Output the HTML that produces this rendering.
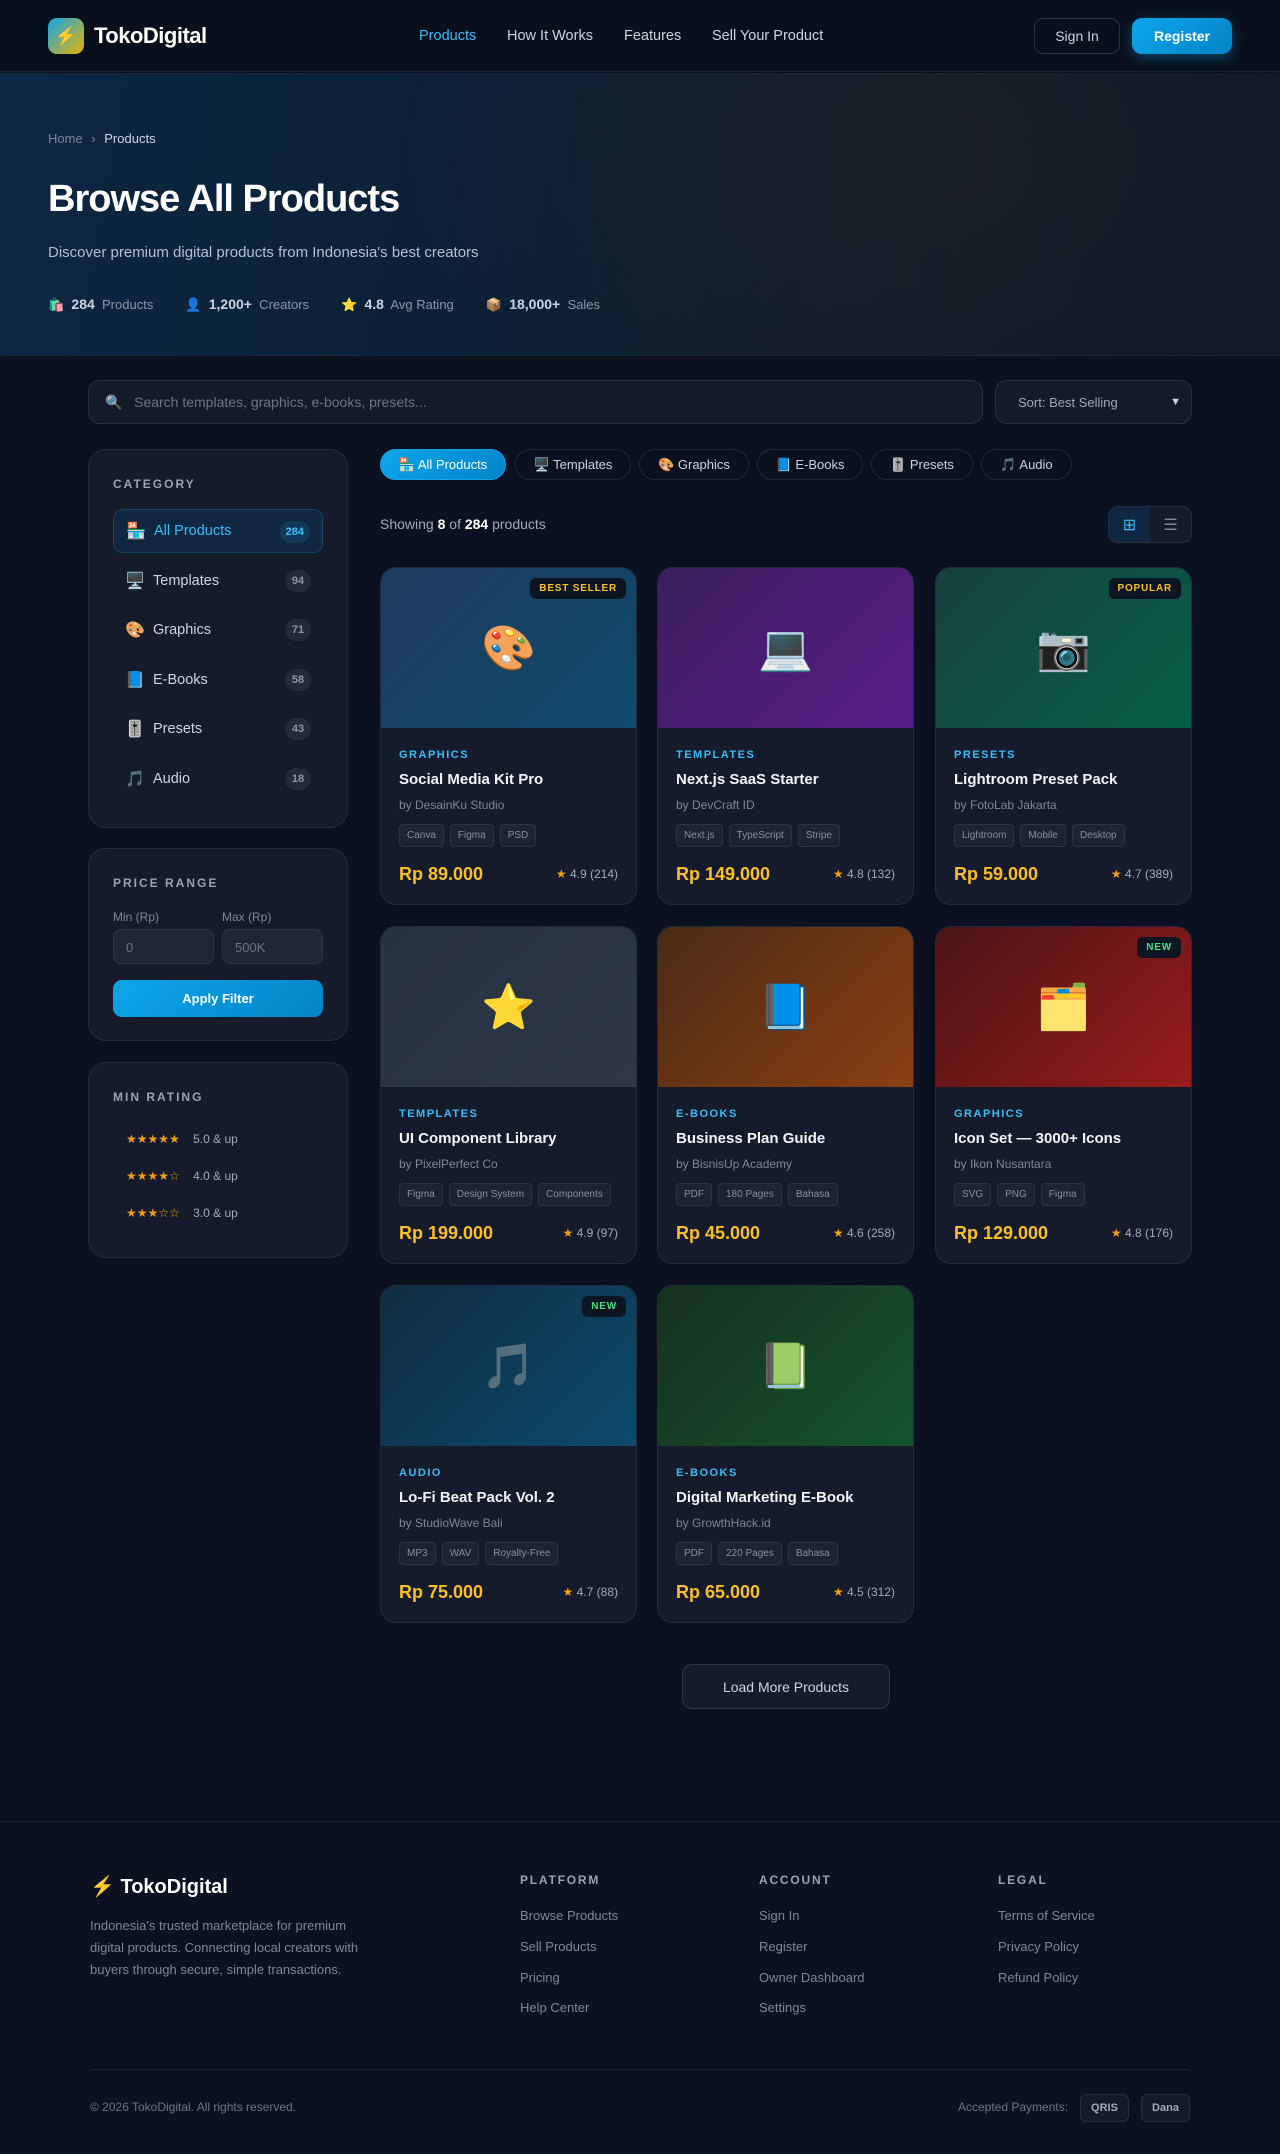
<!DOCTYPE html>
<html><head><meta charset="utf-8"><style>
*{box-sizing:border-box;margin:0;padding:0}
body{width:1280px;height:2154px;background:#0b1120;font-family:"Liberation Sans",sans-serif;color:#e2e8f0;position:relative;overflow:hidden}
.abs{position:absolute}
nav{position:absolute;left:0;top:0;width:1280px;height:72px;background:#0a0f1c;border-bottom:1px solid #1c2434}
.logo-ic{left:48px;top:18px;width:36px;height:36px;border-radius:9px;background:linear-gradient(135deg,#0ea5e9,#eab308);display:flex;align-items:center;justify-content:center;font-size:18px}
.logo-tx{left:94px;top:23px;font-size:22px;font-weight:bold;color:#fff;letter-spacing:-0.5px}
.nl{top:28px;font-size:14.5px;color:#cbd5e1}
.btn-s{left:1034px;top:18px;width:86px;height:36px;border:1px solid #2a3344;border-radius:10px;color:#cbd5e1;font-size:14px;display:flex;align-items:center;justify-content:center}
.btn-r{left:1132px;top:18px;width:100px;height:36px;border-radius:10px;background:linear-gradient(135deg,#0ea5e9,#0284c7);color:#fff;font-weight:bold;font-size:14px;display:flex;align-items:center;justify-content:center;box-shadow:0 4px 14px rgba(14,165,233,.35)}
.hero{left:0;top:73px;width:1280px;height:283px;background:radial-gradient(ellipse 500px 350px at 900px 80px,rgba(40,40,40,.45),transparent),linear-gradient(100deg,#0d2642 0%,#0c2036 40%,#111a28 75%,#0f1726 100%);border-bottom:1px solid #1c2434}
.card{background:#151b2a;border:1px solid #232c3d;border-radius:18px}
.side-h{font-size:12px;font-weight:bold;letter-spacing:2px;color:#94a3b8}
.ci{left:24px;width:210px;height:44px;border-radius:10px;display:flex;align-items:center;padding-left:12px;font-size:14.5px;color:#cbd5e1}
.ci .e{width:28px;font-size:16px}
.ci .b{position:absolute;right:12px;top:11px;min-width:26px;height:22px;border-radius:11px;background:#232b3b;color:#8b95a7;font-size:11px;font-weight:bold;display:flex;align-items:center;justify-content:center;padding:0 6px}
.tab{top:449px;height:31px;border:1px solid #1f2838;border-radius:16px;font-size:13px;color:#cbd5e1;display:flex;align-items:center;justify-content:center}
.pc{position:absolute;width:257px;height:338px;background:#151b2a;border:1px solid #232c3d;border-radius:16px;overflow:hidden}
.pc .img{height:160px;display:flex;align-items:center;justify-content:center;font-size:44px;position:relative}
.badge{position:absolute;right:10px;top:10px;background:#0d1422;border-radius:6px;padding:5px 9px;font-size:10px;font-weight:bold;letter-spacing:.8px}
.pc .cat{position:absolute;left:18px;top:181px;font-size:11px;font-weight:bold;letter-spacing:1.5px;color:#38bdf8}
.pc .t{position:absolute;left:18px;top:203px;font-size:15px;font-weight:bold;color:#f1f5f9}
.pc .by{position:absolute;left:18px;top:230px;font-size:12px;color:#7c869a}
.pc .tags{position:absolute;left:18px;top:256px;display:flex;gap:6px}
.pc .tags span{border:1px solid #2a3344;background:#1c2333;border-radius:4px;font-size:10px;color:#8390a4;padding:5px 7px}
.pc .pr{position:absolute;left:18px;top:296px;font-size:18px;font-weight:bold;color:#fbbf24}
.pc .rt{position:absolute;right:18px;top:299px;font-size:12px;color:#a0aabb}
.pc .rt b{color:#f59e0b;font-weight:normal}
.fh{top:1873px;font-size:12px;font-weight:bold;letter-spacing:1.8px;color:#94a3b8}
.fl{font-size:13px;color:#7c869a}
</style></head><body>
<nav>
<div class="abs logo-ic">⚡</div>
<div class="abs logo-tx">TokoDigital</div>
<div class="abs nl" style="left:419px;color:#38bdf8">Products</div>
<div class="abs nl" style="left:507px">How It Works</div>
<div class="abs nl" style="left:624px">Features</div>
<div class="abs nl" style="left:712px">Sell Your Product</div>
<div class="abs btn-s">Sign In</div>
<div class="abs btn-r">Register</div>
</nav>
<div class="abs hero"></div>
<div class="abs" style="left:48px;top:131px;font-size:13px;color:#7c869a">Home <span style="margin:0 5px">›</span> <span style="color:#cbd5e1">Products</span></div>
<div class="abs" style="left:48px;top:178px;font-size:38px;font-weight:bold;color:#fff;letter-spacing:-1px">Browse All Products</div>
<div class="abs" style="left:48px;top:244px;font-size:15px;color:#b4bfcf">Discover premium digital products from Indonesia's best creators</div>
<div class="abs" style="left:48px;top:296px;font-size:13px;color:#8b95a7;display:flex;gap:32px">
<span>🛍️ &nbsp;<b style="color:#cbd5e1;font-size:14px">284</b>&nbsp; Products</span>
<span>👤 &nbsp;<b style="color:#cbd5e1;font-size:14px">1,200+</b>&nbsp; Creators</span>
<span>⭐ &nbsp;<b style="color:#cbd5e1;font-size:14px">4.8</b>&nbsp; Avg Rating</span>
<span>📦 &nbsp;<b style="color:#cbd5e1;font-size:14px">18,000+</b>&nbsp; Sales</span>
</div>

<div class="abs" style="left:88px;top:380px;width:895px;height:44px;background:#131a28;border:1px solid #263042;border-radius:12px;font-size:14px;color:#6b7588;display:flex;align-items:center;padding-left:16px">🔍&nbsp;&nbsp; Search templates, graphics, e-books, presets...</div>
<div class="abs" style="left:995px;top:380px;width:197px;height:44px;background:#131a28;border:1px solid #263042;border-radius:12px;font-size:13px;color:#a0aabb;display:flex;align-items:center;padding-left:22px">Sort: Best Selling<span style="position:absolute;right:10px;font-size:11px;color:#cbd5e1">▼</span></div>

<div class="abs card" style="left:88px;top:449px;width:260px;height:379px">
<div class="abs side-h" style="left:24px;top:27px">CATEGORY</div>
<div class="abs ci" style="top:59px;background:#112741;border:1px solid #1a4466;color:#38bdf8"><span class="e">🏪</span>All Products<span class="b" style="background:#123a58;color:#38bdf8">284</span></div>
<div class="abs ci" style="top:109px"><span class="e">🖥️</span>Templates<span class="b">94</span></div>
<div class="abs ci" style="top:158px"><span class="e">🎨</span>Graphics<span class="b">71</span></div>
<div class="abs ci" style="top:208px"><span class="e">📘</span>E-Books<span class="b">58</span></div>
<div class="abs ci" style="top:257px"><span class="e">🎚️</span>Presets<span class="b">43</span></div>
<div class="abs ci" style="top:307px"><span class="e">🎵</span>Audio<span class="b">18</span></div>
</div>

<div class="abs card" style="left:88px;top:848px;width:260px;height:193px">
<div class="abs side-h" style="left:24px;top:27px">PRICE RANGE</div>
<div class="abs" style="left:24px;top:61px;font-size:12px;color:#7c869a">Min (Rp)</div>
<div class="abs" style="left:133px;top:61px;font-size:12px;color:#7c869a">Max (Rp)</div>
<div class="abs" style="left:24px;top:80px;width:101px;height:35px;background:#1e2535;border:1px solid #2c3547;border-radius:8px;font-size:13px;color:#6b7588;padding:10px 12px">0</div>
<div class="abs" style="left:133px;top:80px;width:101px;height:35px;background:#1e2535;border:1px solid #2c3547;border-radius:8px;font-size:13px;color:#6b7588;padding:10px 12px">500K</div>
<div class="abs" style="left:24px;top:131px;width:210px;height:37px;border-radius:9px;background:linear-gradient(135deg,#0ea5e9,#0284c7);color:#fff;font-size:13px;font-weight:bold;display:flex;align-items:center;justify-content:center">Apply Filter</div>
</div>

<div class="abs card" style="left:88px;top:1062px;width:260px;height:196px">
<div class="abs side-h" style="left:24px;top:27px">MIN RATING</div>
<div class="abs" style="left:37px;top:69px;font-size:12px;color:#a0aabb"><span style="color:#f59e0b">★★★★★</span>&nbsp;&nbsp;&nbsp; 5.0 &amp; up</div>
<div class="abs" style="left:37px;top:106px;font-size:12px;color:#a0aabb"><span style="color:#f59e0b">★★★★☆</span>&nbsp;&nbsp;&nbsp; 4.0 &amp; up</div>
<div class="abs" style="left:37px;top:143px;font-size:12px;color:#a0aabb"><span style="color:#f59e0b">★★★☆☆</span>&nbsp;&nbsp;&nbsp; 3.0 &amp; up</div>
</div>

<div class="abs tab" style="left:380px;width:126px;background:linear-gradient(135deg,#0ea5e9,#0284c7);border-color:#0ea5e9;color:#fff">🏪 All Products</div>
<div class="abs tab" style="left:515px;width:116px">🖥️ Templates</div>
<div class="abs tab" style="left:639px;width:110px">🎨 Graphics</div>
<div class="abs tab" style="left:757px;width:106px">📘 E-Books</div>
<div class="abs tab" style="left:871px;width:102px">🎚️ Presets</div>
<div class="abs tab" style="left:981px;width:91px">🎵 Audio</div>

<div class="abs" style="left:380px;top:516px;font-size:14px;color:#a0aabb">Showing <b style="color:#fff">8</b> of <b style="color:#fff">284</b> products</div>
<div class="abs" style="left:1108px;top:506px;width:84px;height:37px;border:1px solid #263042;border-radius:10px;overflow:hidden;display:flex;background:#151b2a">
<div style="width:41px;background:#112741;color:#38bdf8;display:flex;align-items:center;justify-content:center;font-size:16px">⊞</div>
<div style="flex:1;color:#7c869a;display:flex;align-items:center;justify-content:center;font-size:16px">☰</div></div>

<div class="pc" style="left:380px;top:567px"><div class="img" style="background:linear-gradient(135deg,#1d3a5e,#0f4a6e)">🎨<span class="badge" style="color:#fbbf24">BEST SELLER</span></div>
<div class="cat">GRAPHICS</div><div class="t">Social Media Kit Pro</div><div class="by">by DesainKu Studio</div>
<div class="tags"><span>Canva</span><span>Figma</span><span>PSD</span></div><div class="pr">Rp 89.000</div><div class="rt"><b>★</b> 4.9 (214)</div></div>

<div class="pc" style="left:657px;top:567px"><div class="img" style="background:linear-gradient(135deg,#3b1f5e,#581c87)">💻</div>
<div class="cat">TEMPLATES</div><div class="t">Next.js SaaS Starter</div><div class="by">by DevCraft ID</div>
<div class="tags"><span>Next.js</span><span>TypeScript</span><span>Stripe</span></div><div class="pr">Rp 149.000</div><div class="rt"><b>★</b> 4.8 (132)</div></div>

<div class="pc" style="left:935px;top:567px"><div class="img" style="background:linear-gradient(135deg,#17403e,#065f46)">📷<span class="badge" style="color:#fbbf24">POPULAR</span></div>
<div class="cat">PRESETS</div><div class="t">Lightroom Preset Pack</div><div class="by">by FotoLab Jakarta</div>
<div class="tags"><span>Lightroom</span><span>Mobile</span><span>Desktop</span></div><div class="pr">Rp 59.000</div><div class="rt"><b>★</b> 4.7 (389)</div></div>

<div class="pc" style="left:380px;top:926px"><div class="img" style="background:linear-gradient(135deg,#263142,#2d3748)">⭐</div>
<div class="cat">TEMPLATES</div><div class="t">UI Component Library</div><div class="by">by PixelPerfect Co</div>
<div class="tags"><span>Figma</span><span>Design System</span><span>Components</span></div><div class="pr">Rp 199.000</div><div class="rt"><b>★</b> 4.9 (97)</div></div>

<div class="pc" style="left:657px;top:926px"><div class="img" style="background:linear-gradient(135deg,#4a2a14,#8a3f12)">📘</div>
<div class="cat">E-BOOKS</div><div class="t">Business Plan Guide</div><div class="by">by BisnisUp Academy</div>
<div class="tags"><span>PDF</span><span>180 Pages</span><span>Bahasa</span></div><div class="pr">Rp 45.000</div><div class="rt"><b>★</b> 4.6 (258)</div></div>

<div class="pc" style="left:935px;top:926px"><div class="img" style="background:linear-gradient(135deg,#4a1414,#991b1b)">🗂️<span class="badge" style="color:#4ade80">NEW</span></div>
<div class="cat">GRAPHICS</div><div class="t">Icon Set — 3000+ Icons</div><div class="by">by Ikon Nusantara</div>
<div class="tags"><span>SVG</span><span>PNG</span><span>Figma</span></div><div class="pr">Rp 129.000</div><div class="rt"><b>★</b> 4.8 (176)</div></div>

<div class="pc" style="left:380px;top:1285px"><div class="img" style="background:linear-gradient(135deg,#0f2c40,#0c4a6e)">🎵<span class="badge" style="color:#4ade80">NEW</span></div>
<div class="cat">AUDIO</div><div class="t">Lo-Fi Beat Pack Vol. 2</div><div class="by">by StudioWave Bali</div>
<div class="tags"><span>MP3</span><span>WAV</span><span>Royalty-Free</span></div><div class="pr">Rp 75.000</div><div class="rt"><b>★</b> 4.7 (88)</div></div>

<div class="pc" style="left:657px;top:1285px"><div class="img" style="background:linear-gradient(135deg,#17301f,#14532d)">📗</div>
<div class="cat">E-BOOKS</div><div class="t">Digital Marketing E-Book</div><div class="by">by GrowthHack.id</div>
<div class="tags"><span>PDF</span><span>220 Pages</span><span>Bahasa</span></div><div class="pr">Rp 65.000</div><div class="rt"><b>★</b> 4.5 (312)</div></div>

<div class="abs" style="left:682px;top:1664px;width:208px;height:45px;background:#151b2a;border:1px solid #2c3547;border-radius:10px;font-size:14px;color:#cbd5e1;display:flex;align-items:center;justify-content:center">Load More Products</div>

<div class="abs" style="left:0;top:1821px;width:1280px;height:1px;background:#1c2434"></div>
<div class="abs" style="left:90px;top:1874px;font-size:20px;font-weight:bold;color:#fff"><span style="color:#fbbf24">⚡</span> TokoDigital</div>
<div class="abs" style="left:90px;top:1915px;width:290px;font-size:13px;line-height:22px;color:#7c869a">Indonesia's trusted marketplace for premium digital products. Connecting local creators with buyers through secure, simple transactions.</div>
<div class="abs fh" style="left:520px">PLATFORM</div>
<div class="abs fh" style="left:759px">ACCOUNT</div>
<div class="abs fh" style="left:998px">LEGAL</div>
<div class="abs fl" style="left:520px;top:1908px">Browse Products</div>
<div class="abs fl" style="left:520px;top:1939px">Sell Products</div>
<div class="abs fl" style="left:520px;top:1970px">Pricing</div>
<div class="abs fl" style="left:520px;top:2000px">Help Center</div>
<div class="abs fl" style="left:759px;top:1908px">Sign In</div>
<div class="abs fl" style="left:759px;top:1939px">Register</div>
<div class="abs fl" style="left:759px;top:1970px">Owner Dashboard</div>
<div class="abs fl" style="left:759px;top:2000px">Settings</div>
<div class="abs fl" style="left:998px;top:1908px">Terms of Service</div>
<div class="abs fl" style="left:998px;top:1939px">Privacy Policy</div>
<div class="abs fl" style="left:998px;top:1970px">Refund Policy</div>
<div class="abs" style="left:90px;top:2069px;width:1100px;height:1px;background:#1c2434"></div>
<div class="abs" style="left:90px;top:2100px;font-size:12px;color:#6b7588">© 2026 TokoDigital. All rights reserved.</div>
<div class="abs" style="left:958px;top:2100px;font-size:12px;color:#6b7588">Accepted Payments:</div>
<div class="abs" style="left:1080px;top:2094px;width:49px;height:28px;border:1px solid #263042;background:#131a28;border-radius:6px;font-size:11px;font-weight:bold;color:#a0aabb;display:flex;align-items:center;justify-content:center">QRIS</div>
<div class="abs" style="left:1141px;top:2094px;width:49px;height:28px;border:1px solid #263042;background:#131a28;border-radius:6px;font-size:11px;font-weight:bold;color:#a0aabb;display:flex;align-items:center;justify-content:center">Dana</div>
</body></html>
